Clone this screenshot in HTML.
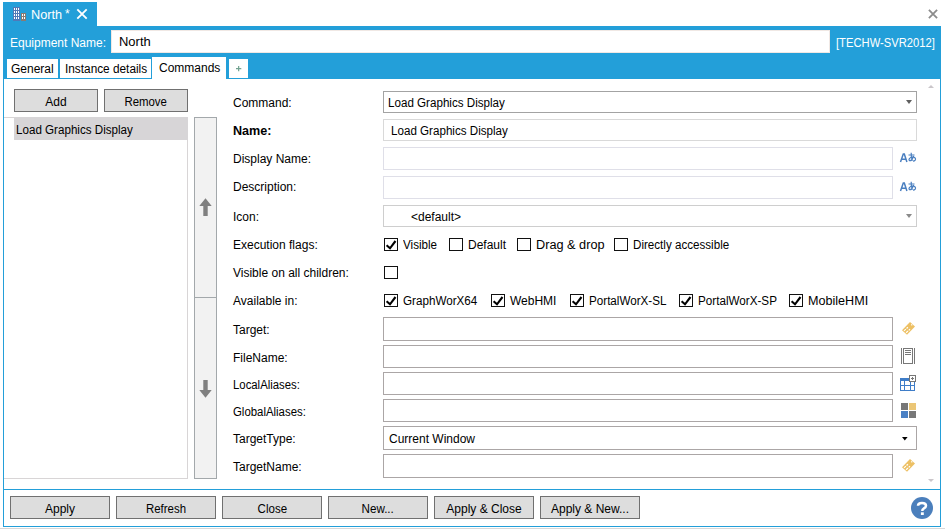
<!DOCTYPE html>
<html><head><meta charset="utf-8">
<style>
*{box-sizing:border-box;margin:0;padding:0}
html,body{width:945px;height:532px;overflow:hidden;background:#fff}
body{position:relative;font-family:"Liberation Sans",sans-serif;font-size:12px;color:#000}
.a{position:absolute}
.t{position:absolute;line-height:14px;white-space:pre}
.blue{background:#239fd9}
.btn{position:absolute;background:#dddddd;border:1px solid #707070;text-align:center;line-height:14px}
.inp{position:absolute;background:#fff;border:1px solid #abadb3}
.lt{border-color:#d9d9d9}
.dk{border-color:#aba6a6}
.cb{position:absolute;width:14px;height:13px;border:1px solid #111;background:#fff}
.lbl{position:absolute;left:233px;line-height:14px;white-space:pre}
.arrow{position:absolute;width:0;height:0;border-left:3px solid transparent;border-right:3px solid transparent;border-top:4px solid #5f5f5f}
</style></head><body>

<!-- title tab -->
<div class="a blue" style="left:3px;top:2px;width:94px;height:25px"></div>
<svg class="a" style="left:13px;top:7px" width="14" height="14" viewBox="0 0 14 14">
<rect x="0" y="0" width="7" height="14" fill="#5079b8"/>
<g fill="#fff"><rect x="1" y="1" width="1" height="2"/><rect x="3" y="1" width="1" height="2"/><rect x="5" y="1" width="1" height="2"/>
<rect x="1" y="4" width="1" height="2"/><rect x="3" y="4" width="1" height="2"/><rect x="5" y="4" width="1" height="2"/>
<rect x="1" y="7" width="1" height="2"/><rect x="3" y="7" width="1" height="2"/><rect x="5" y="7" width="1" height="2"/>
<rect x="1" y="10" width="1" height="2"/><rect x="3" y="10" width="1" height="2"/><rect x="5" y="10" width="1" height="2"/></g>
<rect x="8" y="6" width="5" height="8" fill="#887a72"/>
<g fill="#fff"><rect x="9" y="7" width="1" height="2"/><rect x="11" y="7" width="1" height="2"/><rect x="9" y="10" width="1" height="2"/><rect x="11" y="10" width="1" height="2"/></g>
</svg>
<div class="t" style="left:31px;top:8px;color:#fff;transform:scaleX(1.06);transform-origin:0 0">North</div><div class="t" style="left:65px;top:7px;color:#fff">*</div>
<!-- tab X -->
<svg class="a" style="left:76px;top:8px" width="12" height="12" viewBox="0 0 12 12"><path d="M1.3 1.3L10.7 10.7M10.7 1.3L1.3 10.7" stroke="#fff" stroke-width="1.85"/></svg>
<!-- window close -->
<svg class="a" style="left:928px;top:9px" width="10" height="10" viewBox="0 0 10 10"><path d="M0.9 0.9L9.1 9.1M9.1 0.9L0.9 9.1" stroke="#8c8c8c" stroke-width="1.8"/></svg>

<!-- header -->
<div class="a blue" style="left:3px;top:26px;width:938px;height:53px"></div>
<div class="t" style="left:10px;top:36px;color:#fff">Equipment Name:</div>
<div class="a" style="left:111px;top:30px;width:719px;height:23px;background:#fff;border:1px solid #f0e8e4"></div>
<div class="t" style="left:119px;top:35px;color:#000;transform:scaleX(1.08);transform-origin:0 0">North</div>
<div class="t" style="left:836px;top:36px;color:#fff;transform:scaleX(0.935);transform-origin:0 0">[TECHW-SVR2012]</div>

<!-- tabs -->
<div class="a" style="left:7px;top:59px;width:51px;height:19px;background:#fff"></div>
<div class="t" style="left:11px;top:62px;color:#000">General</div>
<div class="a" style="left:60px;top:59px;width:91px;height:19px;background:#fff"></div>
<div class="t" style="left:65px;top:62px;color:#000;transform:scaleX(0.985);transform-origin:0 0">Instance details</div>
<div class="a" style="left:152px;top:57px;width:74px;height:23px;background:#fff"></div>
<div class="t" style="left:159px;top:61px;color:#000">Commands</div>
<div class="a" style="left:229px;top:59px;width:19px;height:19px;background:#fff"></div>
<svg class="a" style="left:236px;top:66px" width="6" height="6" viewBox="0 0 6 6"><path d="M0 2.6H5.3M2.65 0V5.3" stroke="#72a290" stroke-width="1.2"/></svg>

<!-- content frame -->
<div class="a" style="left:3px;top:78px;width:1px;height:449px;background:#239fd9"></div>
<div class="a" style="left:940px;top:78px;width:1px;height:449px;background:#239fd9"></div>
<div class="a" style="left:3px;top:526px;width:938px;height:1px;background:#239fd9"></div>
<div class="a" style="left:3px;top:489px;width:938px;height:1px;background:#239fd9"></div>
<div class="a" style="left:0;top:528px;width:945px;height:1px;background:#d8d8d8"></div>

<!-- left panel -->
<div class="btn" style="left:14px;top:89px;width:84px;height:23px;padding-top:5px">Add</div>
<div class="btn" style="left:104px;top:89px;width:84px;height:23px;padding-top:5px"><span style="display:inline-block;transform:translateX(-0.7px) scaleX(0.95)">Remove</span></div>
<div class="a" style="left:4px;top:117px;width:184px;height:362px;border:1px solid #d8d5d6;border-left:none"></div>
<div class="a" style="left:14px;top:117px;width:174px;height:23px;background:#d7d5d7"></div>
<div class="t" style="left:16px;top:123px;color:#000;transform:scaleX(0.968);transform-origin:0 0">Load Graphics Display</div>

<!-- scroll/move panel -->
<div class="a" style="left:194px;top:117px;width:23px;height:181px;background:#f2f2f2;border:1px solid #a3a8ab"></div>
<div class="a" style="left:194px;top:297px;width:23px;height:182px;background:#f2f2f2;border:1px solid #a3a8ab"></div>
<svg class="a" style="left:199px;top:198px" width="13" height="19" viewBox="0 0 13 19"><path d="M6.5 0.3L12.7 8H8.7V18H4.3V8H0.3Z" fill="#808080"/></svg>
<svg class="a" style="left:199px;top:379px" width="13" height="19" viewBox="0 0 13 19"><path d="M6.5 18.7L12.7 11H8.7V1H4.3V11H0.3Z" fill="#808080"/></svg>

<!-- form labels -->
<div class="lbl" style="top:96px">Command:</div>
<div class="lbl" style="top:124px;font-weight:bold;transform:scaleX(1.05);transform-origin:0 0">Name:</div>
<div class="lbl" style="top:152px">Display Name:</div>
<div class="lbl" style="top:180px">Description:</div>
<div class="lbl" style="top:210px">Icon:</div>
<div class="lbl" style="top:238px">Execution flags:</div>
<div class="lbl" style="top:266px">Visible on all children:</div>
<div class="lbl" style="top:294px">Available in:</div>
<div class="lbl" style="top:323px">Target:</div>
<div class="lbl" style="top:351px">FileName:</div>
<div class="lbl" style="top:378px;transform:scaleX(0.946);transform-origin:0 0">LocalAliases:</div>
<div class="lbl" style="top:405px;transform:scaleX(0.95);transform-origin:0 0">GlobalAliases:</div>
<div class="lbl" style="top:432px">TargetType:</div>
<div class="lbl" style="top:460px">TargetName:</div>

<!-- fields -->
<div class="inp" style="left:383px;top:91px;width:534px;height:22px;border-color:#a3a3a3"></div>
<div class="t" style="left:388px;top:96px;color:#000;transform:scaleX(0.968);transform-origin:0 0">Load Graphics Display</div>
<div class="arrow" style="left:906px;top:100px"></div>

<div class="inp lt" style="left:383px;top:119px;width:534px;height:22px"></div>
<div class="t" style="left:391px;top:124px;color:#000;transform:scaleX(0.968);transform-origin:0 0">Load Graphics Display</div>

<div class="inp" style="left:383px;top:147px;width:510px;height:23px;border-color:#dfdfe8"></div>
<svg class="a" style="left:899px;top:152px" width="18" height="12" viewBox="0 0 18 12"><path d="M1.5 9.9L4.3 2H5.3L7.9 9.9M2.7 7.2H6.7" fill="none" stroke="#4a7fc0" stroke-width="1.5"/>
<path d="M9.5 3H15.5M12.2 0.8C12 3.5 12.5 6.5 13.4 8.8M14.6 4C13.8 7.2 11.8 9.2 10.5 8.6C9.2 8 10.6 5 13.6 5C16.3 5 17 7 16.2 8.2C15.6 9 14.8 9.2 14 9.2" fill="none" stroke="#4a7fc0" stroke-width="1.2"/></svg>
<div class="inp" style="left:383px;top:176px;width:510px;height:23px;border-color:#dfdfe8"></div>
<svg class="a" style="left:899px;top:181px" width="18" height="12" viewBox="0 0 18 12"><path d="M1.5 9.9L4.3 2H5.3L7.9 9.9M2.7 7.2H6.7" fill="none" stroke="#4a7fc0" stroke-width="1.5"/>
<path d="M9.5 3H15.5M12.2 0.8C12 3.5 12.5 6.5 13.4 8.8M14.6 4C13.8 7.2 11.8 9.2 10.5 8.6C9.2 8 10.6 5 13.6 5C16.3 5 17 7 16.2 8.2C15.6 9 14.8 9.2 14 9.2" fill="none" stroke="#4a7fc0" stroke-width="1.2"/></svg>

<div class="inp" style="left:383px;top:205px;width:534px;height:22px;border-color:#cecece"></div>
<div class="t" style="left:411px;top:210px;color:#000">&lt;default&gt;</div>
<div class="arrow" style="left:906px;top:214px;border-top-color:#8a8a8a"></div>

<!-- checkboxes -->
<div class="cb" style="left:384px;top:238px"></div><svg class="a" style="left:384px;top:238px" width="14" height="13" viewBox="0 0 14 13"><path d="M2.6 7.2L6 10.3L11.5 3" fill="none" stroke="#000" stroke-width="2.1"/></svg>
<div class="t" style="left:403px;top:238px;transform:scaleX(0.97);transform-origin:0 0">Visible</div>
<div class="cb" style="left:449px;top:238px"></div>
<div class="t" style="left:468px;top:238px">Default</div>
<div class="cb" style="left:517px;top:238px"></div>
<div class="t" style="left:536px;top:238px;transform:scaleX(1.06);transform-origin:0 0">Drag &amp; drop</div>
<div class="cb" style="left:614px;top:238px"></div>
<div class="t" style="left:633px;top:238px;transform:scaleX(0.968);transform-origin:0 0">Directly accessible</div>

<div class="cb" style="left:384px;top:266px"></div>

<div class="cb" style="left:384px;top:294px"></div><svg class="a" style="left:384px;top:294px" width="14" height="13" viewBox="0 0 14 13"><path d="M2.6 7.2L6 10.3L11.5 3" fill="none" stroke="#000" stroke-width="2.1"/></svg>
<div class="t" style="left:403px;top:294px;transform:scaleX(0.971);transform-origin:0 0">GraphWorX64</div>
<div class="cb" style="left:491px;top:294px"></div><svg class="a" style="left:491px;top:294px" width="14" height="13" viewBox="0 0 14 13"><path d="M2.6 7.2L6 10.3L11.5 3" fill="none" stroke="#000" stroke-width="2.1"/></svg>
<div class="t" style="left:510px;top:294px">WebHMI</div>
<div class="cb" style="left:570px;top:294px"></div><svg class="a" style="left:570px;top:294px" width="14" height="13" viewBox="0 0 14 13"><path d="M2.6 7.2L6 10.3L11.5 3" fill="none" stroke="#000" stroke-width="2.1"/></svg>
<div class="t" style="left:589px;top:294px;transform:scaleX(0.971);transform-origin:0 0">PortalWorX-SL</div>
<div class="cb" style="left:679px;top:294px"></div><svg class="a" style="left:679px;top:294px" width="14" height="13" viewBox="0 0 14 13"><path d="M2.6 7.2L6 10.3L11.5 3" fill="none" stroke="#000" stroke-width="2.1"/></svg>
<div class="t" style="left:698px;top:294px;transform:scaleX(0.973);transform-origin:0 0">PortalWorX-SP</div>
<div class="cb" style="left:789px;top:294px"></div><svg class="a" style="left:789px;top:294px" width="14" height="13" viewBox="0 0 14 13"><path d="M2.6 7.2L6 10.3L11.5 3" fill="none" stroke="#000" stroke-width="2.1"/></svg>
<div class="t" style="left:808px;top:294px;transform:scaleX(1.05);transform-origin:0 0">MobileHMI</div>

<!-- lower fields -->
<div class="inp dk" style="left:383px;top:317px;width:510px;height:24px"></div>
<div class="inp dk" style="left:383px;top:345px;width:510px;height:23px"></div>
<div class="inp dk" style="left:383px;top:372px;width:510px;height:23px"></div>
<div class="inp dk" style="left:383px;top:399px;width:510px;height:23px"></div>
<div class="inp dk" style="left:383px;top:426px;width:534px;height:24px"></div>
<div class="t" style="left:389px;top:432px;color:#000">Current Window</div>
<svg class="a" style="left:902px;top:437px" width="6" height="4" viewBox="0 0 6 4"><path d="M0 0H5.6L2.8 3.6Z" fill="#000"/></svg>
<div class="inp dk" style="left:383px;top:454px;width:510px;height:24px"></div>


<!-- right icons -->
<svg class="a" style="left:900px;top:320px" width="17" height="17" viewBox="0 0 17 17">
<path d="M10 2L15 6.5L7 14.7L2 10.3Z" fill="#edc064"/>
<path d="M4 10.9L7.9 7.3M6.1 12.8L10 9.2" stroke="#fff" stroke-width="1.2" stroke-dasharray="2.6 0.9"/>
<path d="M11.3 5.3L12.2 4.4" stroke="#fff" stroke-width="1.4"/>
</svg>
<svg class="a" style="left:901px;top:348px" width="14" height="16" viewBox="0 0 14 16">
<rect x="0" y="0" width="1" height="16" fill="#777777"/><rect x="13" y="0" width="1" height="16" fill="#777777"/>
<rect x="2.5" y="0.5" width="9" height="15" fill="none" stroke="#777777" stroke-width="1"/>
<rect x="4" y="2" width="6" height="1" fill="#777777"/><rect x="4" y="4" width="6" height="1" fill="#777777"/><rect x="4" y="6" width="6" height="1" fill="#777777"/>
</svg>
<svg class="a" style="left:900px;top:375px" width="16" height="16" viewBox="0 0 16 16">
<rect x="0" y="3" width="15" height="3" fill="#3f7dc8"/>
<rect x="0.5" y="3.5" width="14" height="12" fill="none" stroke="#3f7dc8" stroke-width="1"/>
<rect x="4" y="3" width="1" height="13" fill="#3f7dc8"/><rect x="10" y="3" width="1" height="13" fill="#3f7dc8"/>
<rect x="0" y="10" width="15" height="1" fill="#3f7dc8"/>
<rect x="9.5" y="0.5" width="6" height="6" fill="#fff" stroke="#777777" stroke-width="1"/>
<path d="M12.5 2V5M11 3.5H14" stroke="#777777" stroke-width="1"/>
</svg>
<svg class="a" style="left:901px;top:403px" width="15" height="15" viewBox="0 0 15 15">
<rect x="0" y="0" width="7" height="7" fill="#777"/><rect x="8" y="0" width="7" height="7" fill="#ebc676"/>
<rect x="0" y="8" width="7" height="7" fill="#4a80c4"/><rect x="8" y="8" width="7" height="7" fill="#787878"/>
</svg>
<svg class="a" style="left:900px;top:457px" width="17" height="17" viewBox="0 0 17 17">
<path d="M10 2L15 6.5L7 14.7L2 10.3Z" fill="#edc064"/>
<path d="M4 10.9L7.9 7.3M6.1 12.8L10 9.2" stroke="#fff" stroke-width="1.2" stroke-dasharray="2.6 0.9"/>
<path d="M11.3 5.3L12.2 4.4" stroke="#fff" stroke-width="1.4"/>
</svg>
<!-- right scroll triangles -->
<div class="a" style="left:928px;top:85px;width:0;height:0;border-left:3px solid transparent;border-right:3px solid transparent;border-bottom:3px solid #cac6ca"></div>
<div class="a" style="left:928px;top:479px;width:0;height:0;border-left:3px solid transparent;border-right:3px solid transparent;border-top:3px solid #cac6ca"></div>

<!-- bottom buttons -->
<div class="btn" style="left:10px;top:496px;width:100px;height:23px;padding-top:5px">Apply</div>
<div class="btn" style="left:116px;top:496px;width:100px;height:23px;padding-top:5px"><span style="display:inline-block;transform:scaleX(0.951)">Refresh</span></div>
<div class="btn" style="left:222px;top:496px;width:100px;height:23px;padding-top:5px"><span style="display:inline-block;transform:scaleX(0.96)">Close</span></div>
<div class="btn" style="left:328px;top:496px;width:100px;height:23px;padding-top:5px"><span style="display:inline-block;transform:scaleX(0.969)">New...</span></div>
<div class="btn" style="left:434px;top:496px;width:100px;height:23px;padding-top:5px">Apply &amp; Close</div>
<div class="btn" style="left:540px;top:496px;width:100px;height:23px;padding-top:5px">Apply &amp; New...</div>

<!-- help -->
<svg class="a" style="left:911px;top:497px" width="22" height="22" viewBox="0 0 22 22"><circle cx="11" cy="11" r="11" fill="#4b7fbc"/><path d="M7 8.8C7 6.6 8.7 5.9 11 5.9C13.4 5.9 15 7 15 8.7C15 10.4 13.6 11 12.5 11.7C11.6 12.3 11.3 12.9 11.3 14" fill="none" stroke="#fff" stroke-width="2.5"/><rect x="9.9" y="15.3" width="2.9" height="2.7" fill="#fff"/></svg>

</body></html>
